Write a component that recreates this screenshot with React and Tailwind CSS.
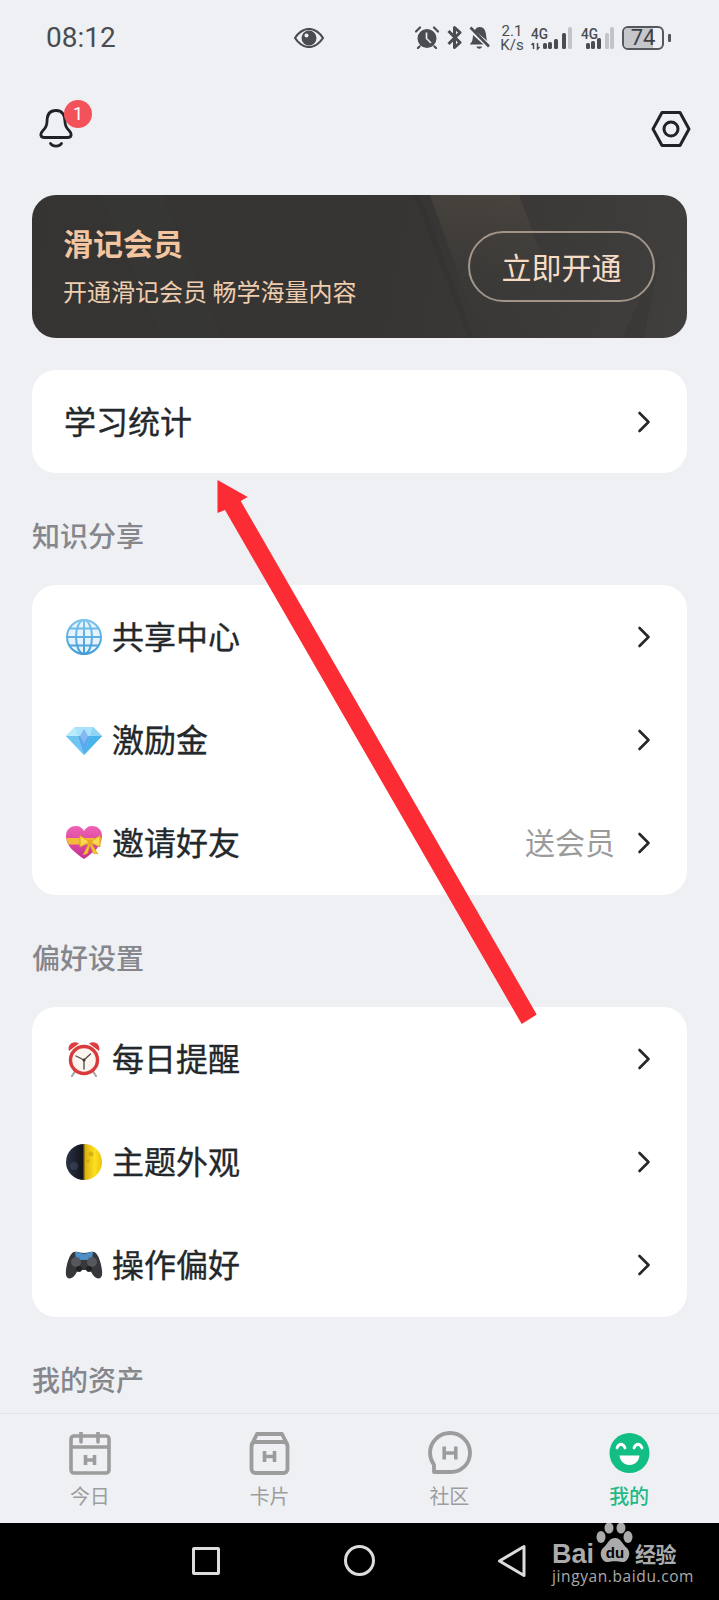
import React from "react";

const CJK = "font-['Noto_Sans_CJK_SC','Noto_Sans',sans-serif]";

function Chevron() {
  return (
    <svg width="14" height="22" viewBox="0 0 14 22" fill="none" className="shrink-0">
      <path d="M2.5 2 L11.5 11 L2.5 20" stroke="#24282b" strokeWidth="2.6" strokeLinecap="round" strokeLinejoin="round" />
    </svg>
  );
}

function Globe() {
  return (
    <svg width="36" height="36" viewBox="0 0 36 36" fill="none">
      <defs>
        <linearGradient id="gl" x1="0" y1="0" x2="0" y2="1">
          <stop offset="0" stopColor="#7cc4ec" />
          <stop offset="1" stopColor="#3f9bd8" />
        </linearGradient>
      </defs>
      <circle cx="18" cy="18" r="17" fill="#e4f3fc" stroke="url(#gl)" strokeWidth="2" />
      <g stroke="url(#gl)" strokeWidth="2">
        <ellipse cx="18" cy="18" rx="8" ry="17" />
        <path d="M18 1V35M1 18H35M3.800 9.500H32.200M3.800 26.500H32.200" />
      </g>
    </svg>
  );
}

function Diamond() {
  return (
    <svg width="36" height="36" viewBox="0 0 36 36">
      <path d="M9 5H27L36 14L18 33L0 14Z" fill="#7fd0f5" />
      <path d="M9 5H27L24 14H12Z" fill="#a9e3fb" />
      <path d="M12 14H24L18 33Z" fill="#5aa9ee" />
      <path d="M0 14L9 5L12 14Z" fill="#b9ecfd" />
      <path d="M36 14L27 5L24 14Z" fill="#8fd4f7" />
      <path d="M0 14H12L18 33Z" fill="#6fc5f2" />
      <path d="M36 14H24L18 33Z" fill="#49b3ea" />
      <path d="M14 14L18 7L22 14L18 22Z" fill="#86b7f2" />
    </svg>
  );
}

function HeartGift() {
  return (
    <svg width="36" height="36" viewBox="0 0 36 36">
      <defs>
        <linearGradient id="hg" x1="0" y1="0" x2="0" y2="1">
          <stop offset="0" stopColor="#ef62b4" />
          <stop offset="1" stopColor="#c7308f" />
        </linearGradient>
      </defs>
      <path d="M18 34C8 27 0 21 0 11C0 4 5 1 10 1C14 1 16.500 3 18 6C19.500 3 22 1 26 1C31 1 36 4 36 11C36 21 28 27 18 34Z" fill="url(#hg)" />
      <path d="M0.400 13H35.600C35.300 15.500 34.500 17.500 33.500 19.500H2.500C1.500 17.500 0.700 15.500 0.400 13Z" fill="#f2bb3a" />
      <path d="M24 17L14 10.500V22ZM24 17L34 10.500V22Z" fill="#fad950" stroke="#dba322" strokeWidth="1" />
      <path d="M23 18L17 30L21.500 28.500L24 20ZM25 18L32 29L27.500 28.500L24 20Z" fill="#f3c233" stroke="#dba322" strokeWidth="0.600" />
      <circle cx="24" cy="17" r="2.400" fill="#e9a922" />
    </svg>
  );
}

function Clock() {
  return (
    <svg width="36" height="36" viewBox="0 0 36 36" fill="none">
      <path d="M3 10C1 4 7 -1 13 2.500ZM33 10C35 4 29 -1 23 2.500Z" fill="#dd3d40" />
      <path d="M8.500 31L6 35M27.500 31L30 35" stroke="#a9a9a9" strokeWidth="2.200" strokeLinecap="round" />
      <circle cx="18" cy="19" r="13.500" fill="#fbf4ef" stroke="#d93a3c" strokeWidth="3.400" />
      <path d="M18 19L10 15M18 19L24.500 13M18 19V28" stroke="#4a4a4a" strokeWidth="1.300" strokeLinecap="round" />
      <circle cx="18" cy="19" r="1.500" fill="#333" />
    </svg>
  );
}

function Moon() {
  return (
    <svg width="36" height="36" viewBox="0 0 36 36">
      <defs>
        <linearGradient id="mh" x1="0" y1="0" x2="1" y2="0">
          <stop offset="0" stopColor="#2b3347" />
          <stop offset="0.46" stopColor="#14151a" />
          <stop offset="0.54" stopColor="#dcb30d" />
          <stop offset="0.8" stopColor="#ffe020" />
          <stop offset="1" stopColor="#e9c310" />
        </linearGradient>
      </defs>
      <circle cx="18" cy="18" r="18" fill="url(#mh)" />
      <circle cx="25" cy="10" r="2.500" fill="#b9960f" opacity="0.5" />
      <circle cx="22" cy="17" r="1.800" fill="#b9960f" opacity="0.45" />
      <circle cx="8" cy="22" r="4" fill="#45506e" opacity="0.5" />
    </svg>
  );
}

function Pad() {
  return (
    <svg width="38" height="36" viewBox="0 0 38 36">
      <path d="M9 5C13 4 15 6 19 6C23 6 25 4 29 5C34 6 38 22 37 28C36 33 31 32 28 28L25 23H13L10 28C7 32 2 33 1 28C0 22 4 6 9 5Z" fill="#35373a" />
      <path d="M10 5.500C14 4 16 7 19 7C22 7 24 4 28 5.500L27 13H11Z" fill="#4b8fc6" />
      <circle cx="11" cy="15" r="5" fill="#55585c" />
      <circle cx="27" cy="15" r="5" fill="#55585c" />
      <circle cx="14" cy="22" r="3" fill="#202124" />
      <circle cx="24" cy="22" r="3" fill="#202124" />
    </svg>
  );
}

function Row({ icon, label, extra }) {
  return (
    <div className="flex h-[103.33px] items-center pl-[33px] pr-[36px]">
      <div className="flex w-[38px] shrink-0 justify-center">{icon}</div>
      <span className="ml-[9px] pb-[4px] text-[32px] leading-none text-[#24282b] [-webkit-text-stroke:0.35px_#24282b]">{label}</span>
      {extra && <span className="ml-auto mr-[22px] pb-[4px] text-[30px] leading-none text-[#9b9b9b]">{extra}</span>}
      <div className={extra ? "" : "ml-auto"}>
        <Chevron />
      </div>
    </div>
  );
}

function SectionLabel({ children }) {
  return (
    <div className="h-[112px] pt-[45px] text-[28px] leading-[34px] font-medium text-[#85878c]">{children}</div>
  );
}

function Signal({ width, lit, centers, heights, arrows }) {
  return (
    <svg width={width} height="24" viewBox={`0 0 ${width} 24`} className="block overflow-visible">
      <text x="0" y="13" fontSize="15" fontWeight="500" fontFamily="Roboto, sans-serif" fill="#4a4c50" textLength="17" lengthAdjust="spacingAndGlyphs">4G</text>
      {arrows && (
        <path d="M2.500 23V17M0.500 19L2.500 17M6.500 17V23L8.500 21" stroke="#4a4c50" strokeWidth="1.500" fill="none" />
      )}
      {centers.map((c, i) => (
        <rect key={c} x={c - 2} y={23 - heights[i]} width="4" height={heights[i]} rx="1.500" fill={i < lit ? "#4a4c50" : "#c2c4c8"} />
      ))}
    </svg>
  );
}

function StatusBar() {
  const c = "#4a4c50";
  return (
    <div className="flex h-[75px] items-center pl-[46px] text-[#4a4c50]">
      <span className="w-[70px] font-['Roboto',sans-serif] text-[28px] leading-none">08:12</span>
      <svg width="30" height="20" viewBox="0 0 30 20" className="ml-[178px]" fill="none">
        <path d="M1 10C5 4 10 1 15 1C20 1 25 4 29 10C25 16 20 19 15 19C10 19 5 16 1 10Z" stroke={c} strokeWidth="2.200" />
        <circle cx="15" cy="10" r="7.500" fill={c} />
        <circle cx="12.500" cy="7.500" r="2" fill="#eef0f4" />
      </svg>
      <svg width="24" height="23" viewBox="0 0 24 23" className="ml-[91px]" fill="none">
        <circle cx="12" cy="12.500" r="9.500" fill={c} />
        <path d="M11.500 6.500V12.500L16 17" stroke="#eef0f4" strokeWidth="1.600" />
        <path d="M1 5.500L5 1.500M23 5.500L19 1.500M4.500 20.500L3 22M19.500 20.500L21 22" stroke={c} strokeWidth="2.200" strokeLinecap="round" />
      </svg>
      <svg width="15" height="23" viewBox="0 0 15 23" className="ml-[8px]" fill="none">
        <path d="M1.500 5L13 16.500L7.500 21.500V1.500L13 6.500L1.500 18" stroke={c} strokeWidth="3" strokeLinejoin="round" />
      </svg>
      <svg width="21" height="24" viewBox="0 0 21 24" className="ml-[7px]" fill={c}>
        <path d="M1 18C3.500 16 3.800 13 4 9L14.500 18.500H1ZM5.500 4.500C7 2 8.500 1 10.500 1C15 1 16.500 4.500 17 8.500C17.300 11 17.400 13 18.500 15Z" />
        <path d="M1.500 1.500L20 20.500" stroke={c} strokeWidth="2.600" />
        <path d="M7.500 20.500H13C12.500 23.500 8 23.500 7.500 20.500Z" />
      </svg>
      <div className="ml-[10px] flex w-[24px] flex-col items-center font-['Roboto',sans-serif] text-[15px] leading-[14px]">
        <span>2.1</span>
        <span>K/s</span>
      </div>
      <div className="ml-[7px]">
        <Signal width={42} lit={4} arrows centers={[14, 19, 25, 33, 39]} heights={[6, 7, 10, 16, 22]} />
      </div>
      <div className="ml-[8px]">
        <Signal width={34} lit={3} centers={[7, 12, 18, 26, 31]} heights={[6, 8, 11, 16, 22]} />
      </div>
      <div className="relative ml-[7px] h-[24px] w-[42px] overflow-hidden rounded-[6px] border-2 border-[#55575b]">
        <div className="h-full w-[76%] bg-[#c5c7cb]" />
        <span className="absolute inset-0 flex items-center justify-center font-['Roboto',sans-serif] text-[22px] leading-none text-[#3f4145]">74</span>
      </div>
      <div className="ml-[4px] h-[8px] w-[3px] rounded-[1px] bg-[#55575b]" />
    </div>
  );
}

function Header() {
  return (
    <div className="flex h-[120px] items-start justify-between pl-[39px] pr-[28px] pt-[25px]">
      <div className="relative">
        <svg width="34" height="40" viewBox="0 0 34 40" fill="none" className="mt-[9px]">
          <path d="M17 1.500C24 1.500 26 7 26 12.500C26 17 27.500 19 30 21.500C33.500 25 32.500 28.500 28.500 28.500H5.500C1.500 28.500 0.500 25 4 21.500C6.500 19 8 17 8 12.500C8 7 10 1.500 17 1.500Z" stroke="#1f2326" strokeWidth="2.800" strokeLinejoin="round" />
          <path d="M11.500 34.500C14 38 20 38 22.500 34.500" stroke="#1f2326" strokeWidth="2.800" strokeLinecap="round" />
        </svg>
        <div className="absolute left-[25px] top-0 flex h-[28px] w-[28px] items-center justify-center rounded-full bg-[#f4525a] font-['Roboto',sans-serif] text-[18px] leading-none text-white">
          1
        </div>
      </div>
      <svg width="40" height="36" viewBox="0 0 40 36" fill="none" className="mt-[11px]">
        <path d="M11 1.500H29L38 18L29 34.500H11L2 18Z" stroke="#1f2326" strokeWidth="3" strokeLinejoin="round" />
        <circle cx="20" cy="18" r="7" stroke="#1f2326" strokeWidth="3" />
      </svg>
    </div>
  );
}

function Banner() {
  return (
    <div className="relative flex h-[143px] items-center justify-between overflow-hidden rounded-[24px] bg-[linear-gradient(100deg,#353432_0%,#363533_55%,#403f3e_100%)] pl-[31px] pr-[32px]">
      <svg className="absolute inset-0" width="655" height="143" viewBox="0 0 655 143" fill="none">
        <defs>
          <linearGradient id="st" x1="0" y1="0" x2="0" y2="1">
            <stop offset="0" stopColor="#544c43" stopOpacity="0.55" />
            <stop offset="1" stopColor="#3c3a38" stopOpacity="0" />
          </linearGradient>
        </defs>
        <path d="M398 0H487L540 143H450Z" fill="url(#st)" />
        <path d="M382 0H388L442 143H436Z" fill="#2c2b2a" opacity="0.25" />
        <path d="M590 143L628 60L612 143Z" fill="#363533" opacity="0.4" />
        <path d="M68 0H130L190 143H130Z" fill="#3a3937" opacity="0.4" />
      </svg>
      <div className="relative flex flex-col pb-[2px]">
        <span className="text-[30px] font-bold leading-[36px] text-[#f3c6a1]">滑记会员</span>
        <span className="mt-[15px] text-[24px] leading-[32px] text-[#efcdaf]">开通滑记会员 畅学海量内容</span>
      </div>
      <div className="relative flex h-[71px] w-[187px] items-center justify-center rounded-full border-2 border-[#a1958a] pb-[2px] text-[30px] leading-none text-[#f6dcc5]">
        立即开通
      </div>
    </div>
  );
}

function TabH({ x, y, w, h }) {
  return (
    <path
      d={`M${x - w} ${y - h}V${y + h}M${x + w} ${y - h}V${y + h}M${x - w} ${y}H${x + w}`}
      stroke="#9c9c9c"
      strokeWidth="3.600"
    />
  );
}

function Tab({ icon, label, active }) {
  return (
    <div className="flex flex-col items-center pt-[18px]">
      <div className="h-[43px] w-[43px]">{icon}</div>
      <span className={`mt-[7px] text-[20px] leading-[28px] ${active ? "font-medium text-[#1fba85]" : "text-[#9d9d9d]"}`}>{label}</span>
    </div>
  );
}

function TabBar() {
  const s = "#9c9c9c";
  return (
    <div className="grid h-[110px] shrink-0 grid-cols-4 border-t border-[#e1e3e7] bg-[#eef0f4]">
      <Tab
        label="今日"
        icon={
          <svg width="43" height="43" viewBox="0 0 43 43" fill="none">
            <rect x="3" y="4" width="38" height="37" rx="3" stroke={s} strokeWidth="3.600" />
            <path d="M3 15H41" stroke={s} strokeWidth="3.600" />
            <path d="M13 0.500V10M30 0.500V10" stroke={s} strokeWidth="3.600" strokeLinecap="round" />
            <TabH x={22} y={28} w={4.500} h={5} />
          </svg>
        }
      />
      <Tab
        label="卡片"
        icon={
          <svg width="43" height="43" viewBox="0 0 43 43" fill="none">
            <rect x="3.500" y="10" width="36" height="31" rx="4" stroke={s} strokeWidth="3.800" />
            <path d="M3.500 13L9 2H34L39.500 13" stroke={s} strokeWidth="3.800" strokeLinejoin="round" />
            <TabH x={21.500} y={24.500} w={5} h={5.500} />
          </svg>
        }
      />
      <Tab
        label="社区"
        icon={
          <svg width="44" height="44" viewBox="0 0 44 44" fill="none" className="mt-[-1px]">
            <path d="M6 41H23C33 41 42 33 42 22C42 11 33 2 22 2C11 2 2 11 2 22C2 27 4 31 6 34Z" stroke={s} strokeWidth="3.800" strokeLinejoin="round" />
            <TabH x={22} y={22} w={5.800} h={6.500} />
          </svg>
        }
      />
      <Tab
        label="我的"
        active
        icon={
          <svg width="43" height="43" viewBox="0 0 43 43" fill="none">
            <circle cx="21.500" cy="21" r="20" fill="#13be85" />
            <path d="M9 16C11 11 15 11 17 16M26 16C28 11 32 11 34 16" stroke="#fff" strokeWidth="2.800" strokeLinecap="round" />
            <path d="M11.500 23.500H31.500C31 29 27 33 21.500 33C16 33 12 29 11.500 23.500Z" fill="#fff" />
          </svg>
        }
      />
    </div>
  );
}

function NavBar() {
  return (
    <div className="relative flex h-[77px] shrink-0 items-center bg-black pb-[2px]">
      <div className="ml-[192px] h-[28px] w-[28px] rounded-[2px] border-[3px] border-[#dcdcdc]" />
      <div className="ml-[124px] h-[31px] w-[31px] rounded-full border-[3px] border-[#dcdcdc]" />
      <svg width="30" height="34" viewBox="0 0 30 34" fill="none" className="ml-[122px]">
        <path d="M27 2.500V31.500L2.500 17Z" stroke="#dcdcdc" strokeWidth="3" strokeLinejoin="round" />
      </svg>
      <div className="absolute left-[552px] top-0 h-[77px] w-[130px] text-[#ababab]">
        <span className="absolute left-0 top-[16px] font-['Liberation_Sans',sans-serif] text-[27px] font-bold leading-[30px]">Bai</span>
        <svg width="40" height="42" viewBox="0 0 40 42" className="absolute left-[43px] top-0" fill="#ababab">
          <ellipse cx="6" cy="14" rx="4.500" ry="6" />
          <ellipse cx="14" cy="5" rx="4.500" ry="5.500" />
          <ellipse cx="26" cy="5" rx="4.500" ry="5.500" />
          <ellipse cx="33" cy="14" rx="4.500" ry="6" />
          <path d="M20 15C26 15 27 21 32 25C37 30 33 40 27 39C23 38 17 38 13 39C7 40 3 30 8 25C13 21 14 15 20 15Z" />
          <text x="20" y="35" textAnchor="middle" fontSize="15" fontWeight="700" fontFamily="Liberation Sans, sans-serif" fill="#000">du</text>
        </svg>
        <span className="absolute left-[83px] top-[18px] text-[21px] font-bold leading-[24px] tracking-[-0.5px]">经验</span>
        <span className="absolute left-0 top-[44px] font-['Open_Sans',sans-serif] text-[15.500px] leading-[18px] tracking-[0.6px]">jingyan.baidu.com</span>
      </div>
    </div>
  );
}

export default function App() {
  return (
    <div className={`relative flex h-[1600px] w-[719px] flex-col overflow-hidden bg-[#eef0f4] ${CJK}`}>
      <div className="min-h-0 flex-1 overflow-hidden">
        <StatusBar />
        <Header />
        <div className="px-[32px]">
          <Banner />
          <div className="mt-[32px] flex h-[103px] items-center justify-between rounded-[24px] bg-white pl-[32px] pr-[36px]">
            <span className="pb-[4px] text-[32px] leading-none text-[#24282b] [-webkit-text-stroke:0.35px_#24282b]">学习统计</span>
            <Chevron />
          </div>
          <SectionLabel>知识分享</SectionLabel>
          <div className="rounded-[24px] bg-white">
            <Row icon={<Globe />} label="共享中心" />
            <Row icon={<Diamond />} label="激励金" />
            <Row icon={<HeartGift />} label="邀请好友" extra="送会员" />
          </div>
          <SectionLabel>偏好设置</SectionLabel>
          <div className="rounded-[24px] bg-white">
            <Row icon={<Clock />} label="每日提醒" />
            <Row icon={<Moon />} label="主题外观" />
            <Row icon={<Pad />} label="操作偏好" />
          </div>
          <SectionLabel>我的资产</SectionLabel>
        </div>
      </div>
      <TabBar />
      <NavBar />
      <svg className="pointer-events-none absolute left-0 top-0" width="719" height="1600" viewBox="0 0 719 1600">
        <path d="M217.500 480L247.700 497L240.700 501L536.700 1014.600L521.700 1024L225 510L217.500 513Z" fill="#fb2c33" />
      </svg>
    </div>
  );
}
